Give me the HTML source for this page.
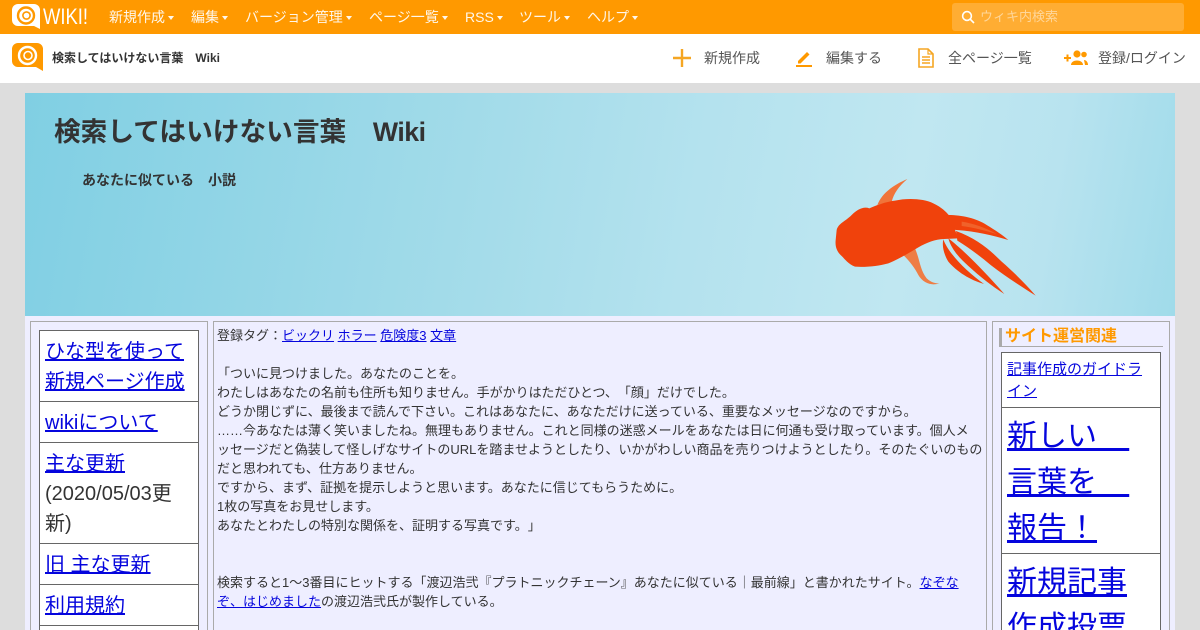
<!DOCTYPE html>
<html lang="ja"><head><meta charset="utf-8"><title>検索してはいけない言葉 Wiki</title>
<style>
html,body{margin:0;padding:0;width:1200px;height:630px;overflow:hidden;background:#ddd}
body{font-family:"Liberation Sans","Noto Sans CJK JP",sans-serif;color:#333;position:relative;text-spacing-trim:space-all}
a{color:#0505dd;text-decoration:underline}
.abs{position:absolute;white-space:nowrap}
#top{position:absolute;left:0;top:0;width:1200px;height:34px;background:#f90}
#top .m{position:absolute;top:8px;color:#fff;font-size:14px;line-height:18px;white-space:nowrap;opacity:.92}
#top .m:after{content:"";display:inline-block;margin-left:3px;vertical-align:2px;border:3.5px solid transparent;border-top:4px solid #fff;border-bottom:0}
#search{position:absolute;left:952px;top:3px;width:232px;height:28px;background:#ffad33;border-radius:3px}
#sub{position:absolute;left:0;top:34px;width:1200px;height:49px;background:#fff}
#sub .t{position:absolute;top:14px;font-size:14px;line-height:20px;color:#555;white-space:nowrap}
#wrap{position:absolute;left:25px;top:93px;width:1150px;height:537px;background:#eef;overflow:hidden}
#banner{position:absolute;left:0;top:0;width:1150px;height:223px;background:linear-gradient(100deg,#80cfe3 0%,#a2dbe9 38%,#b4e2ee 58%,#c0e7f1 76%,#b8e3ef 88%,#a0dbea 100%)}
.box{position:absolute;top:228px;height:320px;border:1px solid #aaa;box-sizing:border-box}
.cell{background:#fff;border:1px solid #666;box-sizing:border-box;position:absolute;padding:0 5px;overflow:hidden}
#main{font-size:13px;line-height:19px;padding:4px 0 4px 3px;color:#333;white-space:nowrap;overflow:hidden}
.lc{font-size:20px;line-height:30px;padding-top:6px}
.rc{font-size:30px;line-height:45px;padding-top:6px}
</style></head><body>
<div id="top">
<svg class="abs" style="left:12px;top:4px" width="30" height="26" viewBox="0 0 30 26"><path d="M6 0H22A6 6 0 0 1 28 6V25L22 22H6A6 6 0 0 1 0 16V6A6 6 0 0 1 6 0Z" fill="#fff"/><circle cx="14" cy="11.500" r="8" fill="none" stroke="#f90" stroke-width="2.400"/><circle cx="14.500" cy="11.500" r="3.600" fill="none" stroke="#f90" stroke-width="1.600"/></svg>
<svg class="abs" style="left:42px;top:4px" width="48" height="24" viewBox="0 0 48 24"><text x="1" y="20" font-family="Liberation Sans" font-size="22" fill="#fff" textLength="45" lengthAdjust="spacingAndGlyphs">WIKI!</text></svg>
<div class="m" style="left:109px">新規作成</div>
<div class="m" style="left:191px">編集</div>
<div class="m" style="left:245px">バージョン管理</div>
<div class="m" style="left:369px">ページ一覧</div>
<div class="m" style="left:465px">RSS</div>
<div class="m" style="left:519px">ツール</div>
<div class="m" style="left:587px">ヘルプ</div>
<div id="search">
<svg class="abs" style="left:9px;top:7px" width="14" height="14" viewBox="0 0 14 14"><circle cx="6" cy="6" r="4.400" fill="none" stroke="#fff" stroke-width="1.600"/><path d="M9.200 9.200L13 13" stroke="#fff" stroke-width="1.600"/></svg>
<div class="abs" style="left:28px;top:5px;font-size:13px;line-height:18px;color:#ffd699">ウィキ内検索</div>
</div>
</div>
<div id="sub">
<svg class="abs" style="left:12px;top:9px" width="32" height="28" viewBox="0 0 32 28"><path d="M6 0H25A6 6 0 0 1 31 6V28L24 24H6A6 6 0 0 1 0 18V6A6 6 0 0 1 6 0Z" fill="#f90"/><circle cx="15.500" cy="12.500" r="8.500" fill="none" stroke="#fff" stroke-width="2.400"/><circle cx="16" cy="12.500" r="4" fill="none" stroke="#fff" stroke-width="1.600"/></svg>
<div class="abs" style="left:52px;top:15px;font-size:12px;line-height:18px;font-weight:bold;color:#333">検索してはいけない言葉　Wiki</div>
<svg class="abs" style="left:672px;top:14px" width="20" height="20" viewBox="0 0 20 20"><path d="M10 1V19M1 10H19" stroke="#f5a623" stroke-width="2.400"/></svg>
<div class="t" style="left:704px">新規作成</div>
<svg class="abs" style="left:795px;top:15px" width="18" height="18" viewBox="0 0 18 18"><path d="M3 12L12 3L14.500 5.500L5.500 14.500H3Z" fill="#f90"/><path d="M1 17H17" stroke="#f90" stroke-width="2"/></svg>
<div class="t" style="left:826px">編集する</div>
<svg class="abs" style="left:918px;top:14px" width="16" height="20" viewBox="0 0 16 20"><path d="M1 1H10L15 6V19H1Z" fill="none" stroke="#f5a623" stroke-width="1.600"/><path d="M10 1V6H15" fill="none" stroke="#f5a623" stroke-width="1.200"/><path d="M4 9H12M4 12H12M4 15H12" stroke="#f5a623" stroke-width="1.400"/></svg>
<div class="t" style="left:948px">全ページ一覧</div>
<svg class="abs" style="left:1064px;top:16px" width="24" height="16" viewBox="0 0 24 16"><path d="M0 8H7M3.500 4.500V11.500" stroke="#f90" stroke-width="2"/><circle cx="13" cy="4" r="3.600" fill="#f90"/><circle cx="20" cy="4.500" r="2.800" fill="#f90"/><path d="M7 15C7 9 19 9 19 15Z" fill="#f90"/><path d="M20 10C22 10 24 12 24 15H21Z" fill="#f90"/></svg>
<div class="t" style="left:1098px">登録/ログイン</div>
</div>
<div id="wrap">
<div id="banner">
<div class="abs" style="left:29px;top:22px;font-size:26.700px;line-height:34px;font-weight:bold;color:#333">検索してはいけない言葉　<span style="letter-spacing:-.5px">Wiki</span></div>
<div class="abs" style="left:57px;top:77px;font-size:14px;line-height:20px;font-weight:bold;color:#333">あなたに似ている　小説</div>
<svg class="abs" style="left:795px;top:77px" width="230" height="135" viewBox="0 0 690 405">
<path d="M172 105C185 70 220 45 262 27C235 50 222 70 215 95Z" fill="#f0743a"/>
<path d="M250 255L285 235C300 270 300 300 320 325C335 338 345 340 358 340C335 348 310 340 295 315C285 295 270 275 250 255Z" fill="#ee7d45"/>
<path d="M50 180C55 160 75 155 95 135C110 120 130 108 148 115C170 105 200 95 225 92C260 84 310 85 340 100C365 112 378 125 388 137L415 205L372 207C345 208 320 218 295 232C265 250 235 268 205 280C175 288 140 292 105 290C85 282 75 268 65 258C50 245 45 230 47 210Z" fill="#f0420c"/>
<path d="M385 135C425 135 470 145 500 165C525 180 550 197 565 210C520 197 470 184 410 180L385 178Z" fill="#f0420c"/>
<path d="M425 155C460 160 500 175 530 192C495 182 460 172 425 168Z" fill="#f0622a"/>
<path d="M408 183C470 205 510 240 545 275C585 310 620 345 647 377C605 350 560 322 512 285C480 258 445 232 412 212Z" fill="#f0420c"/>
<path d="M385 205C425 235 490 300 553 372C515 348 480 320 445 288C420 265 395 240 385 205Z" fill="#f0420c"/>
<path d="M370 208C385 250 440 305 492 342C450 330 410 305 385 275C373 255 365 230 370 208Z" fill="#f0420c"/>
</svg>
</div>
<div class="box" style="left:5px;width:178px"></div>
<div class="box" id="main" style="left:188px;width:774px">登録タグ：<a href="#">ビックリ</a> <a href="#">ホラー</a> <a href="#">危険度3</a> <a href="#">文章</a><br><br>「ついに見つけました。あなたのことを。<br>わたしはあなたの名前も住所も知りません。手がかりはただひとつ、「顔」だけでした。<br>どうか閉じずに、最後まで読んで下さい。これはあなたに、あなただけに送っている、重要なメッセージなのですから。<br>……今あなたは薄く笑いましたね。無理もありません。これと同様の迷惑メールをあなたは日に何通も受け取っています。個人メ<br>ッセージだと偽装して怪しげなサイトのURLを踏ませようとしたり、いかがわしい商品を売りつけようとしたり。そのたぐいのもの<br>だと思われても、仕方ありません。<br>ですから、まず、証拠を提示しようと思います。あなたに信じてもらうために。<br>1枚の写真をお見せします。<br>あなたとわたしの特別な関係を、証明する写真です。」<br><br><br>検索すると1～3番目にヒットする「渡辺浩弐『プラトニックチェーン』あなたに似ている｜最前線」と書かれたサイト。<a href="#">なぞな<br>ぞ、はじめました</a>の渡辺浩弐氏が製作している。</div>
<div class="box" style="left:967px;width:178px"></div>
<div class="cell lc" style="left:14px;top:237px;width:160px;height:72px"><a href="#">ひな型を使って<br>新規ページ作成</a></div>
<div class="cell lc" style="left:14px;top:308px;width:160px;height:42px"><a href="#">wikiについて</a></div>
<div class="cell lc" style="left:14px;top:349px;width:160px;height:102px"><a href="#">主な更新</a><br>(2020/05/03更新)</div>
<div class="cell lc" style="left:14px;top:450px;width:160px;height:42px"><a href="#">旧 主な更新</a></div>
<div class="cell lc" style="left:14px;top:491px;width:160px;height:42px"><a href="#">利用規約</a></div>
<div class="cell" style="left:14px;top:532px;width:160px;height:42px"></div>
<div class="abs" style="left:974px;top:235px;width:164px;height:19px;border-left:3px solid #aaa;border-bottom:1px solid #aaa;box-sizing:border-box;padding-left:3px;font-size:16px;line-height:17px;font-weight:bold;color:#f90">サイト運営関連</div>
<div class="cell" style="left:976px;top:259px;width:160px;height:56px;font-size:15px;line-height:22px;padding-top:6px"><a href="#">記事作成のガイドライン</a></div>
<div class="cell rc" style="left:976px;top:314px;width:160px;height:147px"><a href="#">新しい<span style="font-size:29px">&nbsp;&nbsp;&nbsp;&nbsp;</span><br>言葉を<span style="font-size:29px">&nbsp;&nbsp;&nbsp;&nbsp;</span><br>報告！</a></div>
<div class="cell rc" style="left:976px;top:460px;width:160px;height:100px"><a href="#">新規記事<br>作成投票</a></div>
</div>
</body></html>
